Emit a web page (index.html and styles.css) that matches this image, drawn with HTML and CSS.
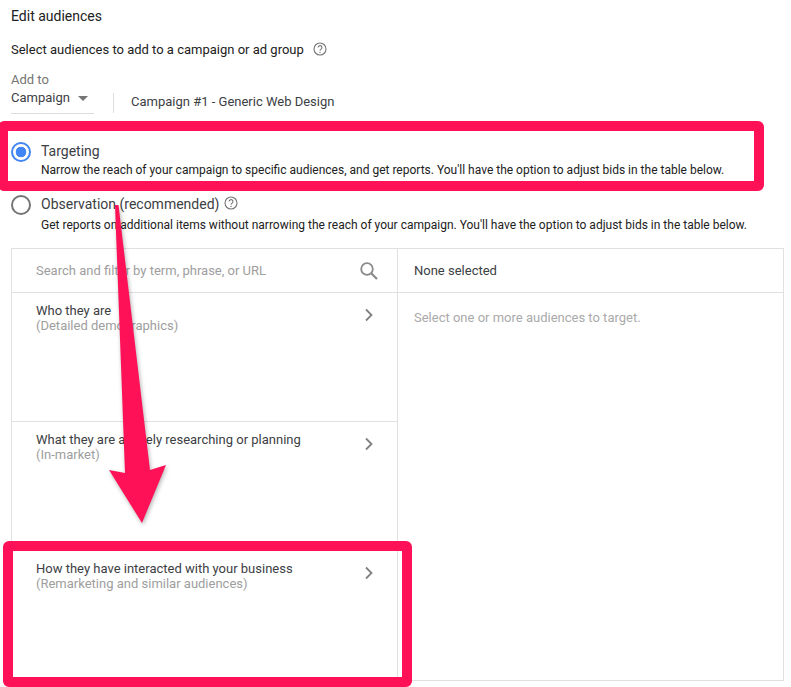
FILE: index.html
```html
<!DOCTYPE html>
<html lang="en">
<head>
<meta charset="utf-8">
<title>Edit audiences</title>
<link rel="stylesheet" href="styles.css">
</head>
<body>
<main class="page">
  <h1 class="title">Edit audiences</h1>
  <div class="prompt">
    <span>Select audiences to add to a campaign or ad group</span>
    <svg class="help" viewBox="0 0 14 14"><circle cx="7" cy="7" r="6" fill="none" stroke="#757575" stroke-width="1.1"/><path d="M5.1 5.6a1.9 1.9 0 1 1 3 1.5c-.7.5-1.1.8-1.1 1.6" fill="none" stroke="#757575" stroke-width="1.1"/><circle cx="7" cy="10.4" r=".7" fill="#757575"/></svg>
  </div>
  <div class="addto">
    <div class="picker">
      <div class="picker-label">Add to</div>
      <div class="picker-value"><span>Campaign</span><i class="caret"></i></div>
    </div>
    <div class="campaign">Campaign #1 - Generic Web Design</div>
  </div>
  <div class="option first">
    <span class="radio on"></span>
    <div>
      <div class="opt-title">Targeting</div>
      <div class="opt-desc">Narrow the reach of your campaign to specific audiences, and get reports. You'll have the option to adjust bids in the table below.</div>
    </div>
  </div>
  <div class="option second">
    <span class="radio"></span>
    <div>
      <div class="opt-title">Observation (recommended)
        <svg class="help small" viewBox="0 0 14 14"><circle cx="7" cy="7" r="6" fill="none" stroke="#757575" stroke-width="1.1"/><path d="M5.1 5.6a1.9 1.9 0 1 1 3 1.5c-.7.5-1.1.8-1.1 1.6" fill="none" stroke="#757575" stroke-width="1.1"/><circle cx="7" cy="10.4" r=".7" fill="#757575"/></svg>
      </div>
      <div class="opt-desc">Get reports on additional items without narrowing the reach of your campaign. You'll have the option to adjust bids in the table below.</div>
    </div>
  </div>
  <section class="panel">
    <div class="left">
      <div class="search">
        <span>Search and filter by term, phrase, or URL</span>
        <svg class="search-icon" viewBox="0 0 20 20"><circle cx="8" cy="8" r="5.8" fill="none" stroke="#8a8a8a" stroke-width="1.8"/><path d="M12.2 12.2 18 18" stroke="#8a8a8a" stroke-width="2.2" fill="none"/></svg>
      </div>
      <div class="row">
        <div><div class="row-title">Who they are</div><div class="row-sub">(Detailed demographics)</div></div>
        <svg class="chev" viewBox="0 0 10 14"><path d="M2 1.5 7.5 7 2 12.5" fill="none" stroke="#808080" stroke-width="1.8"/></svg>
      </div>
      <div class="row">
        <div><div class="row-title">What they are actively researching or planning</div><div class="row-sub">(In-market)</div></div>
        <svg class="chev" viewBox="0 0 10 14"><path d="M2 1.5 7.5 7 2 12.5" fill="none" stroke="#808080" stroke-width="1.8"/></svg>
      </div>
      <div class="row last">
        <div><div class="row-title">How they have interacted with your business</div><div class="row-sub">(Remarketing and similar audiences)</div></div>
        <svg class="chev" viewBox="0 0 10 14"><path d="M2 1.5 7.5 7 2 12.5" fill="none" stroke="#808080" stroke-width="1.8"/></svg>
      </div>
    </div>
    <div class="right">
      <div class="none">None selected</div>
      <div class="hint">Select one or more audiences to target.</div>
    </div>
  </section>
</main>
<div class="mark mark-top"></div>
<div class="mark mark-bottom"></div>
<svg class="arrow" viewBox="0 0 791 687" aria-hidden="true"><polygon points="115,205 118.5,205 150,470 166,465 142,523 109,470 125,473" fill="#ff1158"/></svg>
</body>
</html>
```
FILE: styles.css
```css
* { box-sizing: border-box; }
html, body { margin: 0; padding: 0; }
body {
  position: relative;
  width: 791px;
  height: 687px;
  overflow: hidden;
  background: #fff;
  font-family: Roboto, "Liberation Sans", sans-serif;
  color: #212121;
}
.page { padding: 8px 7px 0 11px; }
.title { margin: 0; font-size: 14px; line-height: 16px; font-weight: 400; }
.prompt {
  display: flex;
  align-items: center;
  gap: 9px;
  margin-top: 17px;
  height: 16px;
  font-size: 13px;
}
.help { width: 14px; height: 14px; flex: none; }
.help.small { vertical-align: -1px; margin-left: 1px; width: 14px; height: 14px; }
.addto { display: flex; margin-top: 15px; height: 42px; }
.picker { width: 83px; border-bottom: 1px solid #dadce0; height: 42px; }
.picker-label { font-size: 13px; line-height: 15px; color: #757575; }
.picker-value { display: flex; align-items: center; gap: 7px; font-size: 13px; line-height: 16px; margin-top: 3px; color: #3c4043; }
.caret { width: 0; height: 0; border: 5px solid transparent; border-top: 5px solid #757575; border-bottom: 0; margin-left: 1px; }
.campaign {
  margin: 21px 0 0 19px;
  height: 20px;
  border-left: 1px solid #dadce0;
  padding-left: 17px;
  font-size: 13px;
  line-height: 17px;
  color: #3c4043;
}
.option { display: flex; gap: 10px; height: 44px; }
.option.first { margin-top: 24px; }
.option.second { margin-top: 9px; }
.radio {
  flex: none;
  width: 20px;
  height: 20px;
  margin-top: 4px;
  border: 2px solid #757575;
  border-radius: 50%;
  background: #fff;
}
.radio.on {
  border-color: #4285f4;
  background: radial-gradient(circle, #4285f4 0 5px, #fff 5.6px);
}
.opt-title { font-size: 14px; line-height: 18px; margin-top: 4px; color: #3c4043; }
.opt-desc { font-size: 12px; line-height: 15px; margin-top: 3px; white-space: nowrap; color: #212121; }
.second .opt-title { margin-top: 4px; }
.second .opt-desc { margin-top: 5px; }
.panel {
  display: flex;
  margin: 13px 0 0 0;
  width: 773px;
  height: 433px;
  border: 1px solid #e0e0e0;
}
.left { width: 386px; flex: none; border-right: 1px solid #e0e0e0; display: flex; flex-direction: column; }
.search {
  display: flex;
  align-items: center;
  justify-content: space-between;
  height: 44px;
  padding: 0 18px 0 24px;
  border-bottom: 1px solid #e0e0e0;
  font-size: 13px;
  color: #9e9e9e;
}
.search-icon { width: 20px; height: 20px; }
.row {
  display: flex;
  justify-content: space-between;
  height: 129px;
  padding: 10px 23px 0 24px;
  border-bottom: 1px solid #e0e0e0;
  font-size: 13px;
  line-height: 15px;
}
.row.last { border-bottom: 0; flex: 1; }
.row-title { color: #3c4043; }
.row-sub { color: #9e9e9e; }
.chev { width: 10px; height: 14px; margin-top: 5px; }
.right { flex: 1; }
.none {
  height: 44px;
  padding-left: 16px;
  border-bottom: 1px solid #e0e0e0;
  font-size: 13px;
  line-height: 43px;
  color: #3c4043;
}
.hint { padding: 17px 0 0 16px; font-size: 13px; line-height: 15px; color: #aaa; }
.mark {
  position: absolute;
  border: 10px solid #ff1158;
  border-radius: 6px;
}
.mark-top { left: -2px; top: 121px; width: 766px; height: 70px; }
.mark-bottom { left: 3px; top: 541px; width: 409px; height: 146px; }
.arrow { position: absolute; left: 0; top: 0; width: 791px; height: 687px; filter: drop-shadow(1px 2px 2px rgba(0,0,0,.3)); }
```
